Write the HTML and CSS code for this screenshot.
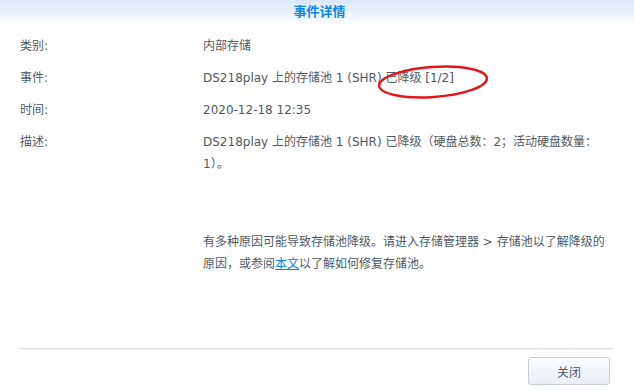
FILE: index.html
```html
<!DOCTYPE html>
<html lang="zh-CN">
<head>
<meta charset="utf-8">
<title>事件详情</title>
<link rel="stylesheet" href="styles.css">
</head>
<body>
<div class="dialog">
  <header class="dialog-header">事件详情</header>
  <main class="dialog-body">
    <div class="row">
      <div class="label">类别:</div>
      <div class="value">内部存储</div>
    </div>
    <div class="row">
      <div class="label">事件:</div>
      <div class="value">DS218play 上的存储池 1 (SHR) 已降级 [1/2]</div>
    </div>
    <div class="row">
      <div class="label">时间:</div>
      <div class="value">2020-12-18 12:35</div>
    </div>
    <div class="row">
      <div class="label">描述:</div>
      <div class="value">
        <p class="desc">DS218play 上的存储池 1 (SHR) 已降级（硬盘总数：2；活动硬盘数量：1）。</p>
        <p class="hint">有多种原因可能导致存储池降级。请进入存储管理器 &gt; 存储池以了解降级的原因，或参阅<a class="link" href="#">本文</a>以了解如何修复存储池。</p>
      </div>
    </div>
  </main>
  <footer class="dialog-footer">
    <button class="btn" type="button">关闭</button>
  </footer>
  <svg class="mark" width="120" height="40" viewBox="0 0 120 40">
    <ellipse cx="60" cy="20" rx="54" ry="15" transform="rotate(-4 60 20)" fill="none" stroke="#e3161c" stroke-width="2.4"/>
  </svg>
</div>
</body>
</html>
```
FILE: styles.css
```css
html, body {
  margin: 0;
  padding: 0;
  background: #ffffff;
}
body {
  font-family: "DejaVu Sans", "Noto Sans CJK SC", sans-serif;
  font-size: 12px;
  color: #505a64;
}
.dialog {
  position: relative;
  width: 634px;
  height: 391px;
  display: flex;
  flex-direction: column;
}
.dialog-header {
  height: 25px;
  line-height: 22px;
  text-align: center;
  font-family: "Noto Sans CJK SC", sans-serif;
  font-weight: bold;
  font-size: 13px;
  color: #0a86e0;
  background: linear-gradient(to bottom, #d9e9f9 0%, #f3f8fd 80%, #ffffff 100%);
  padding-left: 5px;
}
.dialog-body {
  flex: 1;
  padding: 10px 20px 0 20px;
  display: flex;
  flex-direction: column;
  gap: 10px;
}
.row {
  display: grid;
  grid-template-columns: 183px 408px;
  line-height: 22px;
}
.label {
  color: #505a64;
}
.value p {
  margin: 0;
}
.hint {
  margin-top: 56px !important;
}
.link {
  color: #0a86e0;
  text-decoration: underline;
}
.dialog-footer {
  margin: 0 20px;
  border-top: 1px solid #dcdfe3;
  box-shadow: inset 0 1px 0 #f0f2f4;
  height: 43px;
  display: flex;
  justify-content: flex-end;
  align-items: flex-start;
  padding-top: 8px;
  box-sizing: border-box;
}
.btn {
  width: 82px;
  height: 28px;
  margin-right: 4px;
  border: 1px solid #c5ced8;
  border-radius: 3px;
  background: linear-gradient(to bottom, #fafcfe, #eaf0f6);
  font-family: "Noto Sans CJK SC", sans-serif;
  font-size: 12px;
  color: #505a64;
  padding: 0;
}
.mark {
  position: absolute;
  left: 373px;
  top: 62px;
}
```
